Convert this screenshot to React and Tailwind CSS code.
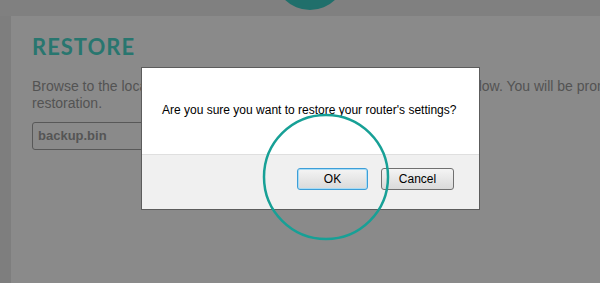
import React from "react";

const App = () => {
  return (
    <div className="relative w-[600px] h-[283px] overflow-hidden bg-[#828282] font-['Liberation_Sans',Arial,sans-serif]">
      {/* top band with the bottom of the header badge */}
      <div className="relative h-[16px] bg-[#808080]">
        <div className="absolute left-[274px] top-[-62px] w-[72px] h-[72px] rounded-full bg-[#206f6b]" />
      </div>

      <div className="flex h-[267px]">
        <div className="w-[11px] bg-[#7e7e7e]" />
        <div className="flex-1 bg-[#8a8a8a] pl-[21px] pt-[20px] overflow-hidden">
          <h2 className="font-['Lato',sans-serif] font-bold text-[22px] leading-[22px] tracking-[1px] text-[#28766f]">
            RESTORE
          </h2>
          <p className="mt-[20px] text-[14px] leading-[17px] text-[#535353] whitespace-nowrap">
            Browse to the location of your saved settings backup file and select it below. You will be prompted to confirm the
            <br />
            restoration.
          </p>
          <div className="mt-[10px] w-[200px] h-[28px] border border-[#585858] rounded-[3px] flex items-center pl-[5px]">
            <span className="text-[13px] font-bold text-[#555555]">backup.bin</span>
          </div>
        </div>
      </div>

      {/* confirm dialog */}
      <div className="absolute left-[141px] top-[67px] w-[339px] h-[143px] border border-[#5c5c5c] flex flex-col bg-white">
        <div className="h-[86px] pl-[20px] pt-[35px] bg-white">
          <p className="text-[12px] leading-[14px] text-black">
            Are you sure you want to restore your router's settings?
          </p>
        </div>
        <div className="flex-1 border-t border-[#dfdfdf] bg-[#f0f0f0] flex justify-end items-start gap-[13px] pt-[13px] pr-[25px]">
          <button className="w-[71px] h-[22px] rounded-[3px] border border-[#3d9ed8] bg-gradient-to-b from-[#f4f4f4] to-[#dadada] text-[12px] text-black shadow-[inset_0_0_0_1px_#a8dcf5]">
            OK
          </button>
          <button className="w-[73px] h-[22px] rounded-[3px] border border-[#707070] bg-gradient-to-b from-[#f4f4f4] to-[#dadada] text-[12px] text-black">
            Cancel
          </button>
        </div>
      </div>

      {/* highlight ring */}
      <svg className="absolute left-0 top-0 pointer-events-none" width="600" height="283">
        <circle cx="326" cy="177" r="62" fill="none" stroke="#17a096" strokeWidth="2.5" />
      </svg>
    </div>
  );
};

export default App;
